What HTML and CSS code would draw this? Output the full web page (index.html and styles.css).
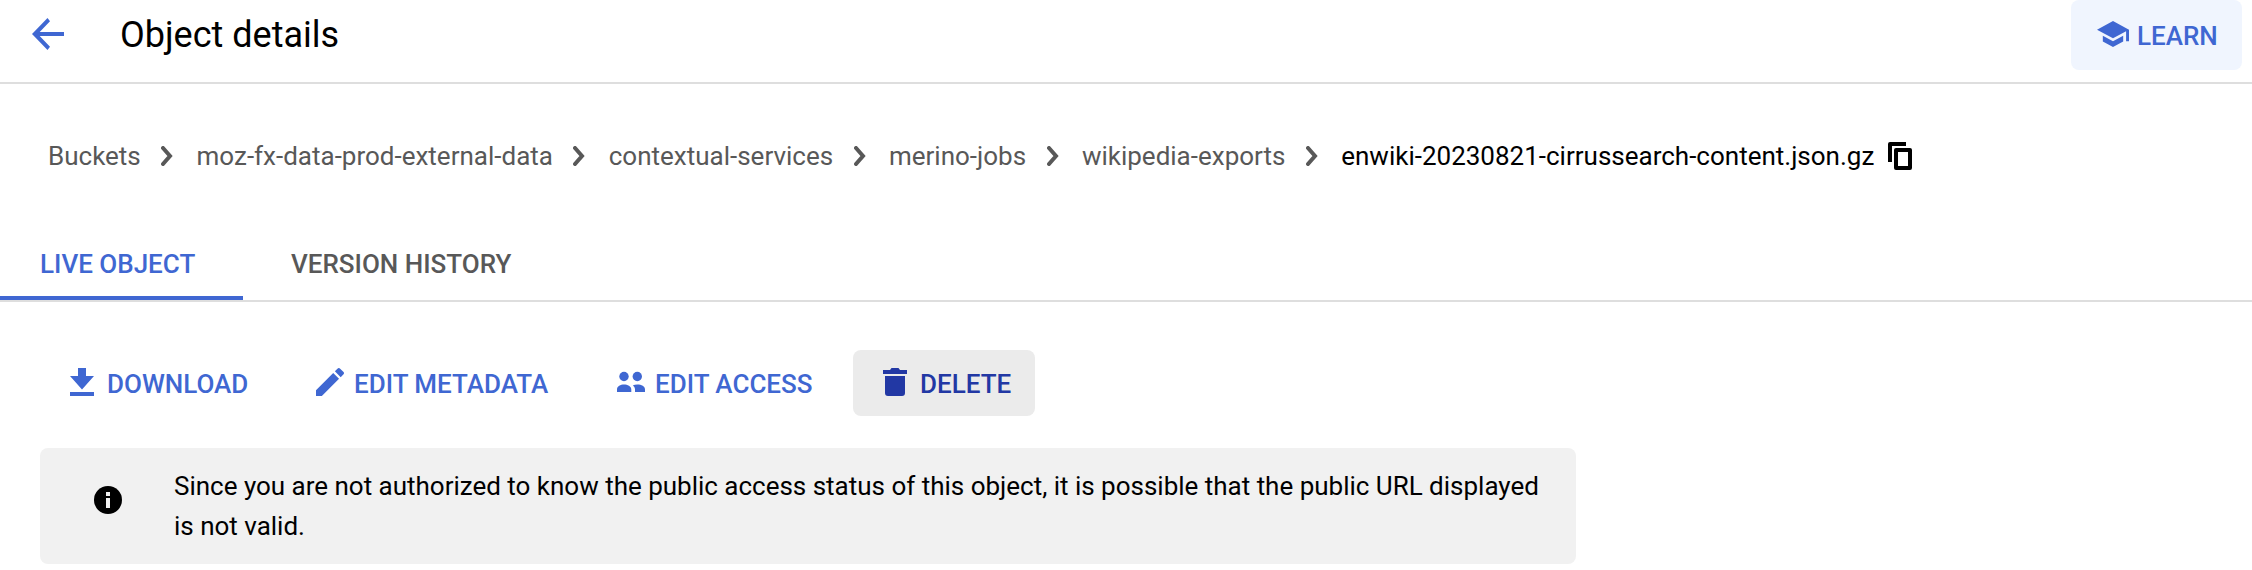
FILE: index.html
```html
<!DOCTYPE html>
<html lang="en">
<head>
<meta charset="utf-8">
<title>Object details</title>
<link rel="stylesheet" href="styles.css">
</head>
<body>
<header class="header">
  <svg class="back" viewBox="0 0 32 32"><path d="M32 14H7.7L18 3.200L15.500 0L0 16L15.500 32L18 28.800L7.700 18H32Z"/></svg>
  <h1 class="title">Object details</h1>
  <button class="learn">
    <svg class="learn-icon" viewBox="1 3 22 18"><path d="M5 13.180v4L12 21l7-3.820v-4L12 17l-7-3.820zM12 3L1 9l11 6 9-4.910V17h2V9L12 3z"/></svg>
    <span>LEARN</span>
  </button>
</header>
<nav class="crumbs">
  <a class="crumb">Buckets</a>
  <svg class="chevron" viewBox="0 0 12 20"><path d="M2 2L9 10L2 18"/></svg>
  <a class="crumb">moz-fx-data-prod-external-data</a>
  <svg class="chevron" viewBox="0 0 12 20"><path d="M2 2L9 10L2 18"/></svg>
  <a class="crumb">contextual-services</a>
  <svg class="chevron" viewBox="0 0 12 20"><path d="M2 2L9 10L2 18"/></svg>
  <a class="crumb">merino-jobs</a>
  <svg class="chevron" viewBox="0 0 12 20"><path d="M2 2L9 10L2 18"/></svg>
  <a class="crumb">wikipedia-exports</a>
  <svg class="chevron" viewBox="0 0 12 20"><path d="M2 2L9 10L2 18"/></svg>
  <span class="crumb current">enwiki-20230821-cirrussearch-content.json.gz</span>
  <svg class="copy" viewBox="0 0 24 28"><path fill-rule="evenodd" d="M2 0H18V4H4V20H0V2Q0 0 2 0ZM8 6H22Q24 6 24 8V26Q24 28 22 28H8Q6 28 6 26V8Q6 6 8 6ZM10 10V24H20V10Z"/></svg>
</nav>
<div class="tabs">
  <a class="tab active">LIVE OBJECT</a>
  <a class="tab">VERSION HISTORY</a>
</div>
<div class="toolbar">
  <button class="action download">
    <svg width="24" height="28" viewBox="0 0 24 28"><path d="M8 0H16V8H24L12 21.500L0 8H8ZM0 24H24V28H0Z"/></svg>
    <span>DOWNLOAD</span>
  </button>
  <button class="action metadata">
    <svg width="28" height="28" viewBox="3 3 18 18"><path d="M3 17.250V21h3.750L17.810 9.940l-3.750-3.750L3 17.250zM20.710 7.040c.39-.39.39-1.020 0-1.410l-2.340-2.340c-.39-.39-1.020-.39-1.410 0l-1.830 1.830 3.750 3.750 1.830-1.830z"/></svg>
    <span>EDIT METADATA</span>
  </button>
  <button class="action access">
    <svg width="28" height="28" viewBox="0 0 28 28"><circle cx="7" cy="8.500" r="4.700"/><circle cx="20.300" cy="8.500" r="4.700"/><path d="M0 24V21.500C0 18 3.500 16.500 7 16.500S14.300 18 14.300 21.500V24ZM15.800 17.400C17 16.800 18.600 16.500 20.300 16.500C24.500 16.500 28 18 28 21.500V24H18V21.300C18 19.500 17 18.200 15.800 17.400Z"/></svg>
    <span>EDIT ACCESS</span>
  </button>
  <button class="action delete">
    <svg width="24" height="28" viewBox="0 0 24 28"><path d="M0 2H7L8.500 0H15.500L17 2H24V6H0ZM2 8H22V25Q22 28 19 28H5Q2 28 2 25Z"/></svg>
    <span>DELETE</span>
  </button>
</div>
<div class="notice">
  <svg class="info" viewBox="0 0 28 28"><circle cx="14" cy="14" r="14"/><path class="info-mark" d="M12 6H16V10H12ZM12 12H16V22H12Z"/></svg>
  <p class="notice-text">Since you are not authorized to know the public access status of this object, it is possible that the public URL displayed is not valid.</p>
</div>
</body>
</html>
```
FILE: styles.css
```css
* { box-sizing: border-box; }
body {
  margin: 0;
  height: 570px;
  overflow: hidden;
  background: #fff;
  color: #000;
  font: 400 26px/40px Roboto, sans-serif;
}
svg { display: block; flex: none; fill: currentColor; }
button { border: 0; background: none; font: inherit; font-weight: 500; white-space: nowrap; }
.header {
  display: flex;
  align-items: flex-start;
  height: 84px;
  border-bottom: 2px solid #dedede;
}
.back { width: 32px; height: 32px; margin: 18px 0 0 32px; color: #3f67d2; }
.title { margin: 15px 0 0 56px; font-size: 36px; line-height: 40px; font-weight: 400; white-space: nowrap; }
.learn {
  display: flex;
  width: 171px;
  height: 70px;
  margin-left: auto;
  margin-right: 10px;
  padding: 16px 0 0 26px;
  gap: 8px;
  border-radius: 8px;
  background: #f0f5fe;
  color: #3f67d2;
}
.learn-icon { width: 32px; height: 28px; margin-top: 4px; }
.crumbs {
  display: flex;
  align-items: center;
  height: 40px;
  margin: 52px 0 0 48px;
  color: #585858;
}
.crumb { white-space: nowrap; }
.current { color: #000; }
.chevron { width: 12px; height: 20px; margin: 0 23.4px 0 20.4px; fill: none; stroke: currentColor; stroke-width: 4; stroke-linecap: round; }
.copy { width: 24px; height: 28px; margin-left: 14px; color: #000; }
.tabs {
  display: flex;
  height: 78px;
  margin-top: 48px;
  border-bottom: 2px solid #dedede;
  color: #585858;
  font-weight: 500;
}
.tab { height: 76px; padding: 20px 48px 0; white-space: nowrap; }
.tab.active { width: 243px; padding: 20px 0 0 40px; border-bottom: 4px solid #3f67d2; color: #3f67d2; }
.toolbar { display: flex; height: 66px; margin: 48px 0 0 50px; color: #3f67d2; }
.action {
  display: flex;
  height: 66px;
  padding: 14px 0 0 20px;
  border-radius: 8px;
  color: inherit;
}
.action svg { margin-top: 4px; }
.download { width: 246px; gap: 13px; }
.metadata { width: 301px; gap: 10px; }
.access { width: 256px; gap: 10px; }
.delete { width: 182px; padding-left: 30px; gap: 13px; background: #ebebeb; color: #2238a4; }
.notice {
  display: flex;
  width: 1536px;
  height: 116px;
  margin: 32px 0 0 40px;
  padding: 18px 0 0 54px;
  border-radius: 8px;
  background: #f1f1f1;
}
.info { width: 28px; height: 28px; margin-top: 20px; }
.info-mark { fill: #f1f1f1; }
.notice-text { width: 1390px; margin: 0 0 0 52px; letter-spacing: -0.01px; }
```
